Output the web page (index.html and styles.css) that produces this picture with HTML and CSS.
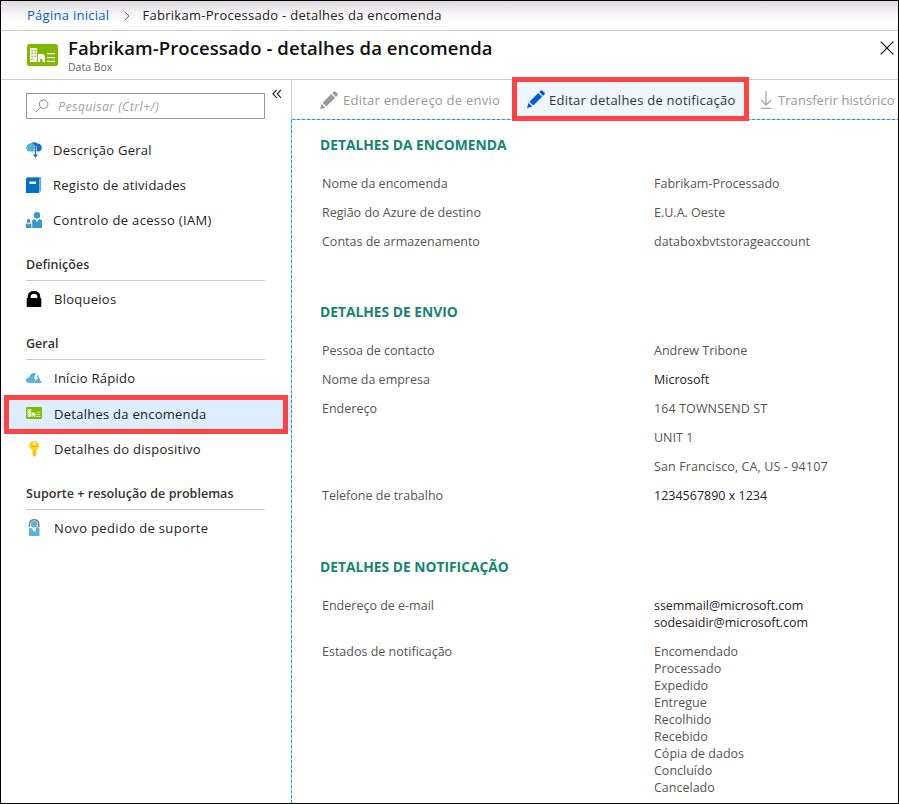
FILE: index.html
```html
<!DOCTYPE html>
<html lang="pt">
<head>
<meta charset="utf-8">
<title>Fabrikam-Processado - detalhes da encomenda</title>
<link rel="stylesheet" href="styles.css">
</head>
<body>
<svg class="defs" width="0" height="0">
  <symbol id="card" viewBox="0 0 31 22">
    <rect width="31" height="22" rx="2.5" fill="#7fba00"/>
    <path fill="#fff" fill-rule="evenodd" d="M3 4h7v14H3zM4.300 5.500v1.500h1.500V5.500zM7.300 5.500v1.500h1.500V5.500zM4.300 8.500v1.500h1.500V8.500zM7.300 8.500v1.500h1.500V8.500zM4.300 11.500v1.500h1.500v-1.500zM7.300 11.500v1.500h1.500v-1.500zM4.300 14.500V16h1.500v-1.500zM11 10h5.500v1.500H18V18h-2.500v-3h-2.300v3H11z"/>
    <path stroke="#fff" stroke-width="1.200" d="M20 9.600h8M20 13.600h8M20 17.400h8"/>
  </symbol>
  <symbol id="pencil" viewBox="0 0 18 18">
    <path fill="currentColor" d="M0 18l1.600-5.200 3.700 3.700zM2.500 11.800L11.300 3l3.800 3.800-8.800 8.800zM12.200 2.100l1.400-1.400q1-1 2 0l1.800 1.800q1 1 0 2L16 5.900z"/>
  </symbol>
</svg>
<div class="blade">
  <nav class="crumbs">
    <a class="home">Página inicial</a>
    <svg class="chev" width="8" height="10" viewBox="0 0 8 10"><path d="M1.500.7L6 5 1.500 9.300" fill="none" stroke="#666"/></svg>
    <span class="here">Fabrikam-Processado - detalhes da encomenda</span>
  </nav>
  <header class="head">
    <svg class="logo" width="31" height="22"><use href="#card"/></svg>
    <div class="titles">
      <h1>Fabrikam-Processado - detalhes da encomenda</h1>
      <p>Data Box</p>
    </div>
    <svg class="close" width="14" height="14" viewBox="0 0 14 14"><path d="M.7.700l12.600 12.600M13.300.700L.7 13.300" stroke="#111" stroke-width="1.200"/></svg>
  </header>
  <div class="body">
    <aside class="side">
      <div class="searchrow">
        <div class="search">
          <svg width="14" height="14" viewBox="0 0 14 14" fill="none" stroke="#888"><circle cx="8.600" cy="5.200" r="4.300"/><path d="M5.600 8.300L.6 13.300"/></svg>
          <span>Pesquisar (Ctrl+/)</span>
        </div>
        <svg class="fold" width="10" height="10" viewBox="0 0 10 10"><path d="M4.700.8L1 4.800l3.700 4M9 .8L5.300 4.800l3.700 4" fill="none" stroke="#222" stroke-width="1.200"/></svg>
      </div>
      <div class="item top"><svg width="16" height="16" viewBox="0 0 16 16"><path fill="#1b6fc2" d="M5 1.500C6.500-.3 10-.3 11.300 1.600 14 1.500 16 3.500 15.800 6c0 2-1.500 3.500-3.800 3.500H8z"/><path fill="#4fb4dc" d="M8.500 2.200C6 .3 1.300 1.500.4 4.600-.5 8 2 9.800 4.500 9.500H8.500z"/><path d="M9.500 4v8.500" stroke="#fff" stroke-width="2.400"/><path d="M9.500 5.500V13" stroke="#1b6fc2" stroke-width="1.200"/><path fill="#1b6fc2" d="M6.800 12.500h5.400L9.500 15.700zM8 6l1.500-2L11 6z"/></svg><span>Descrição Geral</span></div>
      <div class="item top"><svg width="16" height="16" viewBox="0 0 16 16"><path fill="#5aa5e0" d="M1 0h14v14.500h-1.500V2H1z"/><path fill="#0072c6" d="M0 1h13.300v15H0z"/><path fill="#fff" d="M3.500 4.500h6.500v2.500H3.500z"/></svg><span>Registo de atividades</span></div>
      <div class="item top wide"><svg width="16" height="16" viewBox="0 0 16 16" fill="#3999c6"><circle cx="11" cy="3.200" r="3.200"/><path d="M6.200 16V8.200L8.700 7l2.300 3 2.300-3L16 8.200V16z"/><circle cx="2.600" cy="9" r="1.900"/><path d="M0 16v-4.200l1.300-.6 1.300 1.500 1.300-1.500 1.500.6V16z"/></svg><span>Controlo de acesso (IAM)</span></div>
      <h3>Definições</h3>
      <div class="item"><svg width="16" height="16" viewBox="0 0 16 16"><path fill="#000" d="M1.700 7V5.500Q2 0 8 0t6.300 5.500V7h.2q.8 0 .8.900V15q0 .9-.8.900H1.500q-.8 0-.8-.9V7.900q0-.9.8-.9zm3 0h6.600V5.500Q11 2.800 8 2.800T4.700 5.500z"/></svg><span>Bloqueios</span></div>
      <h3>Geral</h3>
      <div class="item"><svg width="16" height="16" viewBox="0 0 16 16"><path fill="#59b4d9" d="M2.800 13Q0 13 0 10.300 0 8 3.300 7.600 4 3 8.200 3q3.300 0 4 3l3.600 7z"/><path fill="#fff" d="M9.500 4L7.800 8.500h2L8 12.500l4.300-5.300h-2L12 4z"/></svg><span>Início Rápido</span></div>
      <div class="item selected"><svg width="16" height="12" viewBox="0 0 31 22" preserveAspectRatio="none"><use href="#card" width="31" height="22"/></svg><span>Detalhes da encomenda</span></div>
      <div class="item"><svg width="16" height="16" viewBox="0 0 16 16"><path fill="#fcd116" fill-rule="evenodd" d="M8.300 0Q13 .3 13.200 4.500 13 7.700 10.500 8.700v5.600L8.700 16 6.500 14.500V8.700Q3.300 7.500 3.200 4.500 3.500.3 8.300 0zM8.300 1.400a1.300 1.300 0 100 2.600 1.300 1.300 0 000-2.600z"/><path d="M5.500 5.500h5.500M8 9v5.500" stroke="#f0b010"/></svg><span>Detalhes do dispositivo</span></div>
      <h3>Suporte + resolução de problemas</h3>
      <div class="item wide"><svg width="16" height="18" viewBox="0 0 16 18"><path d="M3.500 8V5Q4 .8 8.200.8t4.600 4.200V8" fill="none" stroke="#7a7a7a" stroke-width="1.400"/><circle cx="8.200" cy="5.300" r="3.300" fill="#59b4d9"/><path fill="#59b4d9" d="M3 9.300L5.500 9l2.700 4L11 9l2.500.3V17H3z"/><path d="M13 7.500q-.5 1.800-3 1.800" fill="none" stroke="#7a7a7a"/></svg><span>Novo pedido de suporte</span></div>
      <div class="mark mark-item"></div>
    </aside>
    <main class="main">
      <div class="tools">
        <div class="tool t1"><svg width="18" height="18"><use href="#pencil"/></svg><span>Editar endereço de envio</span></div>
        <div class="tool t2"><svg width="18" height="18"><use href="#pencil"/></svg><span>Editar detalhes de notificação</span></div>
        <div class="tool t3"><svg width="12" height="18" viewBox="0 0 12 18" fill="none" stroke="#aaa" stroke-width="1.300"><path d="M6 0v14M1 9l5 5 5-5M.5 17.300h11"/></svg><span>Transferir histórico</span></div>
      </div>
      <div class="content">
      <section>
        <h2>DETALHES DA ENCOMENDA</h2>
        <dl>
          <dt>Nome da encomenda</dt><dd>Fabrikam-Processado</dd>
          <dt>Região do Azure de destino</dt><dd>E.U.A. Oeste</dd>
          <dt>Contas de armazenamento</dt><dd>databoxbvtstorageaccount</dd>
        </dl>
      </section>
      <section>
        <h2>DETALHES DE ENVIO</h2>
        <dl>
          <dt>Pessoa de contacto</dt><dd>Andrew Tribone</dd>
          <dt>Nome da empresa</dt><dd class="dark">Microsoft</dd>
          <dt>Endereço</dt><dd class="addr">164 TOWNSEND ST</dd>
          <dd>UNIT 1</dd>
          <dd class="addr">San Francisco, CA, US - 94107</dd>
          <dt>Telefone de trabalho</dt><dd class="dark">1234567890 x 1234</dd>
        </dl>
      </section>
      <section>
        <h2>DETALHES DE NOTIFICAÇÃO</h2>
        <dl>
          <dt>Endereço de e-mail</dt><dd class="dark mail">ssemmail@microsoft.com<br>sodesaidir@microsoft.com</dd>
          <dt>Estados de notificação</dt><dd>Encomendado<br>Processado<br>Expedido<br>Entregue<br>Recolhido<br>Recebido<br>Cópia de dados<br>Concluído<br>Cancelado</dd>
        </dl>
      </section>
      </div>
    </main>
  </div>
</div>
</body>
</html>
```
FILE: styles.css
```css
* { box-sizing: border-box; margin: 0; padding: 0; }
body { font-family: "Open Sans", "Noto Sans", sans-serif; font-size: 13px; color: #333; background: #fff; overflow: hidden; }
.defs { position: absolute; }
.blade { width: 899px; height: 804px; border: 1px solid #000; display: flex; flex-direction: column; overflow: hidden; }
span, h1, h2, h3, p, dt, dd, a { white-space: nowrap; }

.crumbs { height: 30px; flex: none; display: flex; align-items: center; padding: 0 0 1px 26px; border-bottom: 1px solid #ccc; background: linear-gradient(#dddadd, #f8f7f8 14px, #fff 22px); letter-spacing: .28px; }
.crumbs .home { color: #015cda; }
.chev { margin: 1px 11px 0 14px; }
.here { color: #222; }

.head { height: 49px; flex: none; display: flex; padding: 0 4px 0 26px; border-bottom: 1px solid #ccc; }
.logo { margin-top: 13px; }
.titles { margin-left: 10px; flex: 1; }
h1 { font-size: 18.500px; font-weight: 600; line-height: 24px; margin-top: 5px; color: #111; letter-spacing: .07px; }
.titles p { font-size: 10.500px; line-height: 14px; color: #666; }
.close { margin-top: 10px; }

.body { flex: 1; display: flex; min-height: 0; }
.side { width: 290px; flex: none; position: relative; }
.searchrow { display: flex; height: 52px; padding: 13px 0 0 25px; }
.search { width: 239px; height: 26px; border: 1px solid #999; display: flex; align-items: center; padding-left: 8px; gap: 9px; color: #a2a2a2; font-style: italic; font-size: 12.500px; letter-spacing: .33px; }
.fold { margin: -4px 0 0 7px; }
.item { height: 35px; display: flex; align-items: center; gap: 12px; padding-left: 25px; color: #222; letter-spacing: .26px; }
.item svg { flex: none; }
.top { gap: 11px; }
.wide { letter-spacing: .35px; }
.selected { height: 36px; background: #dceeff; }
.selected span { padding-top: 1px; }
.side h3 { width: 239px; height: 44px; margin-left: 25px; padding-top: 18px; border-bottom: 1px solid #ccc; font-size: 12.500px; line-height: 20px; font-weight: 600; color: #333; letter-spacing: .04px; }
.mark { position: absolute; border: 5px solid #ff4343; }
.mark-item { left: 3px; top: 315px; width: 284px; height: 39px; }

.main { flex: 1; min-width: 0; display: flex; flex-direction: column; }
.tools { height: 40px; flex: none; display: flex; border-left: 1px solid #ccc; color: #999; letter-spacing: .25px;
  background: repeating-linear-gradient(90deg, #00abec 0 3px, #ccc 3px 5px) left bottom / 100% 1px no-repeat; }
.content { flex: 1; padding-left: 1px; background: repeating-linear-gradient(#00abec 0 3px, #ccc 3px 5px) left top / 1px 100% no-repeat; }
.tool { display: flex; align-items: center; }
.t1 { padding-left: 28px; width: 220px; gap: 5px; }
.t2 { position: relative; width: 237px; height: 44px; margin-top: -3px; padding-left: 10px; gap: 4px; border: 5px solid #ff4343; background: #eff6ff; color: #333; }
.t2 svg { color: #015cda; }
.t2 span { padding-top: 2px; }
.t3 { padding-left: 11px; gap: 6px; letter-spacing: .06px; }

section { padding-left: 28px; }
section + section { margin-top: 31px; }
section:last-child { margin-top: 32px; }
h2 { height: 49px; padding-top: 15px; line-height: 20px; font-size: 13.800px; font-weight: 700; color: #12866f; }
dl { display: grid; grid-template-columns: 332px 1fr; padding-left: 2px; font-size: 12.500px; line-height: 17px; color: #555; }
dt, dd { padding: 6px 0; }
dd { grid-column: 2; }
.dark { color: #222; }
.addr { letter-spacing: .11px; }
.mail { letter-spacing: -.05px; }
```
